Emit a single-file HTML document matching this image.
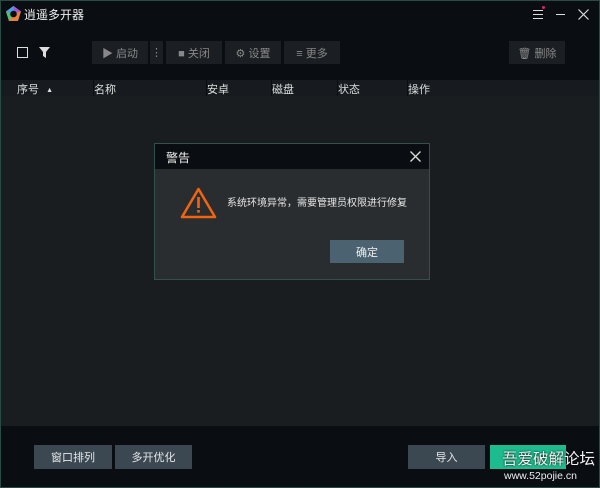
<!DOCTYPE html><html><head><meta charset="utf-8"><style>
*{margin:0;padding:0;box-sizing:border-box}
body{width:600px;height:488px;background:#0a0e13;font-family:"Liberation Sans","Noto Sans CJK SC",sans-serif;font-size:11px;color:#ddd;position:relative;overflow:hidden}
.frame{position:absolute;inset:0;border:1px solid #2c4a44}
.a{position:absolute;white-space:nowrap}
.tb{position:absolute;top:41px;height:23px;background:#1b1f23;color:#888;display:flex;align-items:center;justify-content:center;gap:4px;font-size:11px}
.hd{position:absolute;top:80px;left:1px;right:1px;height:16px;background:#171b1f;font-size:11px;color:#ddd}
.hd span{position:absolute;top:1px}
.bb{position:absolute;top:445px;height:24px;background:#3b4852;color:#e6e6e6;display:flex;align-items:center;justify-content:center;font-size:11px}
</style></head><body>
<div class="a" style="left:1px;top:96px;right:1px;height:330px;background:#1a1d20"></div>
<div class="hd"><span style="left:16px">序号 <span style="position:relative;font-size:7px;left:4px;top:-1px">▲</span></span><span style="left:93px">名称</span><span style="left:206px">安卓</span><span style="left:271px">磁盘</span><span style="left:337px">状态</span><span style="left:407px">操作</span>
<div class="a" style="left:92px;top:0;width:1px;height:16px;background:#0a0e13"></div><div class="a" style="left:205px;top:0;width:1px;height:16px;background:#0a0e13"></div><div class="a" style="left:270px;top:0;width:1px;height:16px;background:#0a0e13"></div><div class="a" style="left:336px;top:0;width:1px;height:16px;background:#0a0e13"></div><div class="a" style="left:406px;top:0;width:1px;height:16px;background:#0a0e13"></div></div>
<svg class="a" style="left:5px;top:5px" width="17" height="17" viewBox="0 0 17 17"><polygon points="8.5,1 16,6.5 13,16 4,16 1,6.5" fill="#e8813a"/><polygon points="8.5,1 16,6.5 8.5,8.5" fill="#9b5ad6"/><polygon points="1,6.5 8.5,1 8.5,8.5" fill="#4aa0e8"/><polygon points="4,16 1,6.5 8.5,8.5" fill="#48c27a"/><circle cx="8.5" cy="9" r="3.3" fill="#0a0e13"/></svg>
<div class="a" style="left:24px;top:6px;font-size:12px;color:#eee">逍遥多开器</div>
<div class="a" style="left:533px;top:10px;width:10px;height:1px;background:#ddd;box-shadow:0 4px #ddd,0 8px #ddd"></div>
<div class="a" style="left:542px;top:6px;width:3px;height:3px;background:#e0245e;border-radius:50%"></div>
<div class="a" style="left:556px;top:14px;width:9px;height:1px;background:#ddd"></div>
<svg class="a" style="left:578px;top:9px" width="11" height="11"><path d="M0.5 0.5L10.5 10.5M10.5 0.5L0.5 10.5" stroke="#ddd" stroke-width="1.2"/></svg>
<div class="a" style="left:17px;top:47px;width:11px;height:11px;border:1.5px solid #ddd"></div>
<svg class="a" style="left:39px;top:47px" width="11" height="11"><polygon points="0,0 11,0 7,5 7,11 4,9 4,5" fill="#ddd"/></svg>
<div class="tb" style="left:92px;width:56px">▶ 启动</div>
<div class="tb" style="left:150px;width:13px">⋮</div>
<div class="tb" style="left:166px;width:56px">■ 关闭</div>
<div class="tb" style="left:225px;width:56px">⚙ 设置</div>
<div class="tb" style="left:284px;width:56px">≡ 更多</div>
<div class="tb" style="left:509px;width:56px">🗑 删除</div>
<div class="a" style="left:154px;top:143px;width:276px;height:137px;background:#2a2d30;border:1px solid #34504a"></div>
<div class="a" style="left:155px;top:144px;width:274px;height:25px;background:#0a0d11"></div>
<div class="a" style="left:166px;top:149px;font-size:12px;color:#eee">警告</div>
<svg class="a" style="left:410px;top:151px" width="11" height="11"><path d="M0.5 0.5L10.5 10.5M10.5 0.5L0.5 10.5" stroke="#ddd" stroke-width="1.3"/></svg>
<svg class="a" style="left:180px;top:187px" width="37" height="33" viewBox="0 0 37 33"><path d="M18.5 2 L35 30 L2 30 Z" fill="none" stroke="#f2650f" stroke-width="2.5" stroke-linejoin="round"/><rect x="17.2" y="10" width="2.6" height="11" fill="#f2650f"/><rect x="17.2" y="23" width="2.6" height="2.6" fill="#f2650f"/></svg>
<div class="a" style="left:227px;top:194px;font-size:10px;color:#e6e6e6">系统环境异常，需要管理员权限进行修复</div>
<div class="a" style="left:330px;top:240px;width:74px;height:23px;background:#4b6370;color:#eee;display:flex;align-items:center;justify-content:center">确定</div>
<div class="bb" style="left:34px;width:78px">窗口排列</div>
<div class="bb" style="left:115px;width:77px">多开优化</div>
<div class="bb" style="left:408px;width:77px">导入</div>
<div class="bb" style="left:490px;width:76px;background:#1dbb8e"></div>
<div class="a" style="left:502px;top:447px;font-size:15.5px;color:#f2f2f2;text-shadow:0 0 2px #000">吾爱破解论坛</div>
<div class="a" style="left:504px;top:470px;font-size:10.5px;color:#eee">www.52pojie.cn</div>
<div class="frame"></div>
</body></html>
